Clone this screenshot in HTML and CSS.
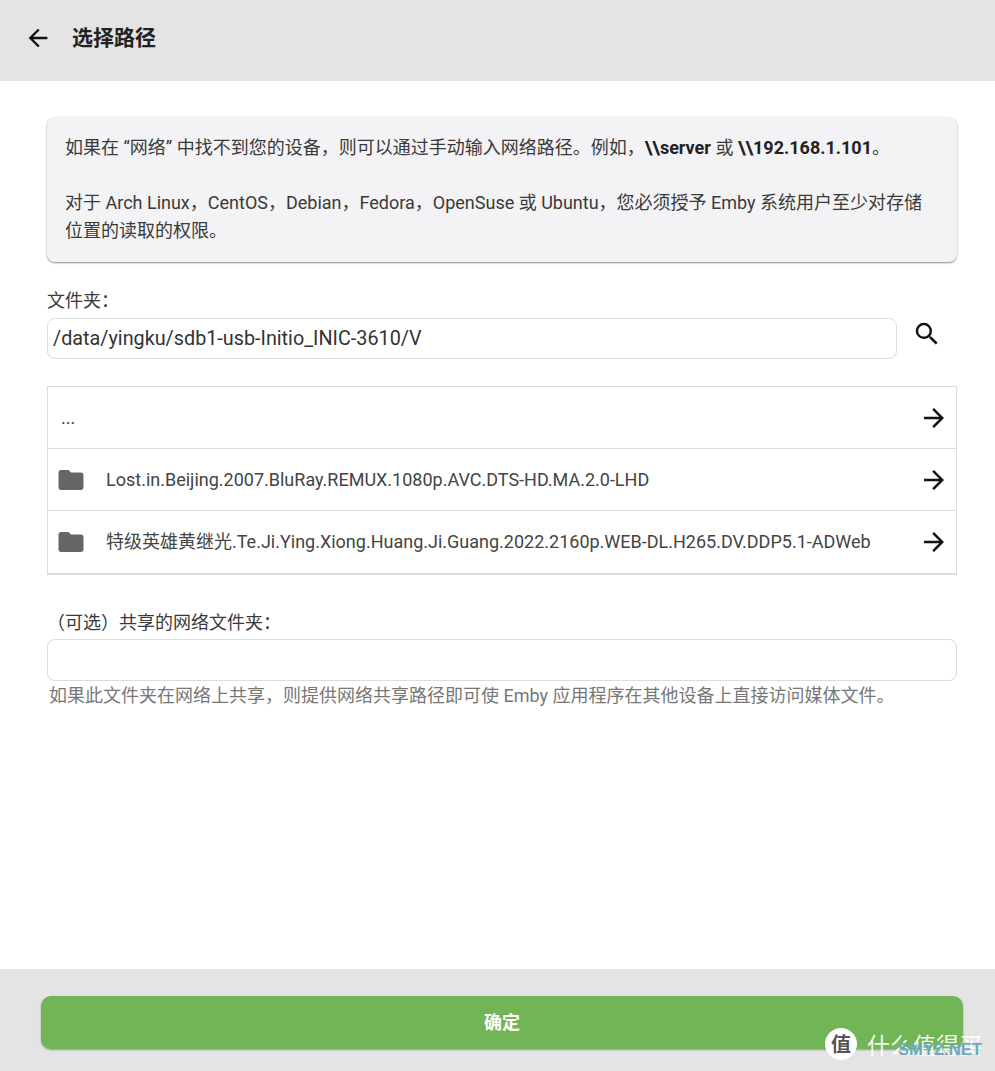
FILE: index.html
```html
<!DOCTYPE html>
<html lang="zh-CN">
<head>
<meta charset="utf-8">
<title>选择路径</title>
<link rel="stylesheet" href="styles.css">
</head>
<body>
<div class="page">
  <header class="topbar">
    <svg class="icon back" viewBox="0 0 24 24"><path d="M20 11H7.83l5.59-5.59L12 4l-8 8 8 8 1.41-1.41L7.83 13H20z"/></svg>
    <h1 class="title">选择路径</h1>
  </header>
  <main class="content">
    <section class="notice">
      <p class="notice-p">如果在 “网络” 中找不到您的设备，则可以通过手动输入网络路径。例如，<b>\\server</b> 或 <b>\\192.168.1.101</b>。</p>
      <p class="notice-p">对于 Arch Linux，CentOS，Debian，Fedora，OpenSuse 或 Ubuntu，您必须授予 Emby 系统用户至少对存储位置的读取的权限。</p>
    </section>
    <label class="label">文件夹：</label>
    <div class="path-row">
      <div class="input path-input">/data/yingku/sdb1-usb-Initio_INIC-3610/V</div>
      <svg class="icon search" viewBox="0 0 24 24"><path d="M15.5 14h-.79l-.28-.27A6.47 6.47 0 0 0 16 9.5 6.5 6.5 0 1 0 9.5 16c1.61 0 3.09-.59 4.23-1.57l.27.28v.79l5 4.99L20.49 19l-4.99-5zm-6 0C7.01 14 5 11.99 5 9.5S7.01 5 9.5 5 14 7.01 14 9.5 11.99 14 9.5 14z"/></svg>
    </div>
    <ul class="list">
      <li class="row">
        <span class="row-text dots">...</span>
        <svg class="icon arrow" viewBox="0 0 24 24"><path d="M4 13h12.17l-5.59 5.59L12 20l8-8-8-8-1.41 1.41L16.17 11H4z"/></svg>
      </li>
      <li class="row">
        <svg class="folder" viewBox="0 0 24 24"><path d="M10 4H4c-1.1 0-2 .9-2 2v12c0 1.1.9 2 2 2h16c1.1 0 2-.9 2-2V8c0-1.1-.9-2-2-2h-8l-2-2z"/></svg>
        <span class="row-text">Lost.in.Beijing.2007.BluRay.REMUX.1080p.AVC.DTS-HD.MA.2.0-LHD</span>
        <svg class="icon arrow" viewBox="0 0 24 24"><path d="M4 13h12.17l-5.59 5.59L12 20l8-8-8-8-1.41 1.41L16.17 11H4z"/></svg>
      </li>
      <li class="row">
        <svg class="folder" viewBox="0 0 24 24"><path d="M10 4H4c-1.1 0-2 .9-2 2v12c0 1.1.9 2 2 2h16c1.1 0 2-.9 2-2V8c0-1.1-.9-2-2-2h-8l-2-2z"/></svg>
        <span class="row-text">特级英雄黄继光.Te.Ji.Ying.Xiong.Huang.Ji.Guang.2022.2160p.WEB-DL.H265.DV.DDP5.1-ADWeb</span>
        <svg class="icon arrow" viewBox="0 0 24 24"><path d="M4 13h12.17l-5.59 5.59L12 20l8-8-8-8-1.41 1.41L16.17 11H4z"/></svg>
      </li>
    </ul>
    <label class="label share-label">（可选）共享的网络文件夹：</label>
    <div class="input share-input"></div>
    <p class="hint">如果此文件夹在网络上共享，则提供网络共享路径即可使 Emby 应用程序在其他设备上直接访问媒体文件。</p>
  </main>
  <footer class="footer">
    <button class="confirm">确定</button>
  </footer>
</div>
<div class="watermark">
  <span class="wm-logo">值</span>
  <span class="wm-text">什么值得买</span>
  <span class="wm-site">SMYZ.NET</span>
</div>
</body>
</html>
```
FILE: styles.css
```css
* { box-sizing: border-box; }
html, body { margin: 0; padding: 0; background: #fff; }
body { font-family: Roboto, "Noto Sans CJK SC", sans-serif; color: #222; overflow: hidden; }
.page { width: 995px; height: 1071px; display: flex; flex-direction: column; }

.topbar { height: 81px; background: #e4e4e4; display: flex; align-items: center; padding: 0 0 5px 24px; flex: none; }
.icon { fill: #111; flex: none; }
.back { width: 28px; height: 28px; }
.title { margin: 0 0 0 20px; font-size: 21px; line-height: 28px; font-weight: 700; color: #222; }

.content { flex: 1; padding: 36px 38px 0 47px; }
.notice { background: #f3f3f5; border-radius: 8px; box-shadow: 0 1px 2px rgba(0,0,0,.45); padding: 17px 18px 0; height: 145px; }
.notice-p { margin: 0 0 27.5px; font-size: 18px; line-height: 27.5px; color: #3a3a3a; }
.notice-p:last-child { margin-bottom: 0; }
.notice-p b { font-weight: 700; color: #222; }

.label { display: block; font-size: 18px; line-height: 24px; color: #3a3a3a; }
.notice + .label { margin-top: 27px; }

.path-row { display: flex; align-items: center; margin-top: 5px; }
.input { border: 1px solid #dcdcdc; border-radius: 8px; background: #fff; }
.path-input { width: 850px; height: 41px; padding: 0 5px; font-size: 19.8px; line-height: 39px; color: #333; }
.search { width: 30px; height: 30px; margin: -10px 0 0 15px; }

.list { list-style: none; margin: 27px 0 0; padding: 0; width: 910px; border: 1px solid #dcdcdc; border-bottom-width: 2px; }
.row { display: flex; align-items: center; height: 62.2px; border-bottom: 1px solid #dcdcdc; padding: 0 7px 0 8px; }
.row:last-child { height: 61.4px; border-bottom: 0; }
.folder { width: 30px; height: 30px; fill: #666; flex: none; }
.row-text { flex: 1; margin-left: 20px; font-size: 18px; line-height: 24px; color: #444; white-space: nowrap; }
.dots { margin-left: 5px; }
.arrow { width: 30px; height: 30px; }

.share-label { margin-top: 36px; }
.share-input { width: 910px; height: 42px; margin-top: 4px; }
.hint { margin: 3px 0 0 2px; font-size: 18px; line-height: 24px; color: #777; white-space: nowrap; }

.footer { height: 102px; flex: none; background: #e4e4e4; padding: 27px 32px 0 41px; }
.confirm { display: block; width: 100%; height: 53px; border: 0; border-radius: 10px; background: #72b556; color: #fff; padding: 0 0 4px; font: 700 18px Roboto, "Noto Sans CJK SC", sans-serif; box-shadow: 0 1px 2px rgba(0,0,0,.35); }

.watermark { position: absolute; left: 825px; top: 1028px; width: 165px; height: 34px; }
.wm-logo { position: absolute; left: 0; top: 0; width: 32px; height: 32px; border-radius: 50%; background: #fff; color: #555; font: 700 20px/32px "Noto Sans CJK SC", sans-serif; text-align: center; }
.wm-text { position: absolute; left: 42px; top: 0; font: 400 23px/32px "Noto Sans CJK SC", sans-serif; color: rgba(255,255,255,.92); white-space: nowrap; }
.wm-site { position: absolute; left: 73px; top: 12px; font: 700 16.6px/20px "Liberation Sans", sans-serif; color: #6fa9c0; white-space: nowrap; }
```
